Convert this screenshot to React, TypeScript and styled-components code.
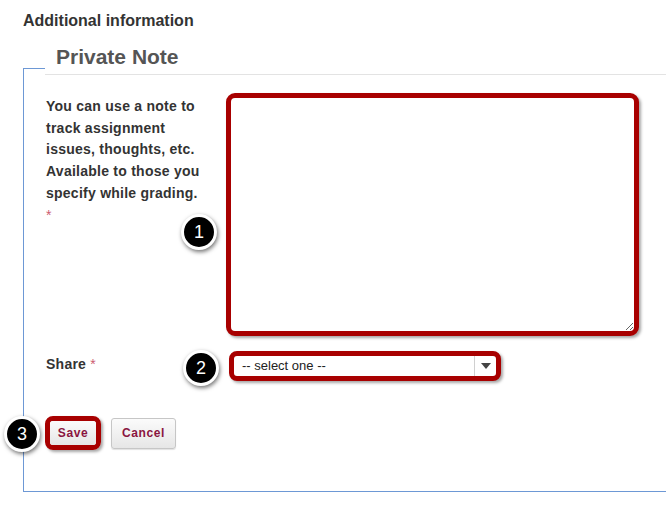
import React from "react";
import styled, { createGlobalStyle } from "styled-components";

const GlobalStyle = createGlobalStyle`
  html, body {
    margin: 0;
    padding: 0;
    background: #ffffff;
    overflow: hidden;
  }
  body {
    font-family: "Liberation Sans", Arial, sans-serif;
  }
`;

const annotationRed = "#a80000";
const fieldsetBlue = "#6d98d5";

const Page = styled.div`
  width: 666px;
  height: 518px;
  box-sizing: border-box;
  padding: 11px 0 0 23px;
`;

const Heading = styled.h3`
  margin: 0 0 37px;
  font-size: 16px;
  line-height: 20px;
  font-weight: bold;
  color: #333333;
`;

// FIELDSET

const Fieldset = styled.section`
  position: relative;
  display: flex;
  flex-direction: column;
  border-left: 1px solid ${fieldsetBlue};
  border-bottom: 1px solid ${fieldsetBlue};
  padding: 0 0 41px 22px;

  &::before {
    content: "";
    position: absolute;
    left: -1px;
    top: 0;
    width: 22px;
    border-top: 1px solid ${fieldsetBlue};
  }
`;

const Legend = styled.h2`
  margin: -23px 0 18px -1px;
  padding: 0 0 5px 11px;
  font-size: 21px;
  line-height: 24px;
  font-weight: bold;
  color: #555555;
  border-bottom: 1px solid #e3e3e3;
`;

const Row = styled.div<{ $label: number; $gap?: number }>`
  display: grid;
  grid-template-columns: ${(p) => p.$label}px auto;
  align-items: start;
  margin-top: ${(p) => p.$gap ?? 0}px;
`;

const Label = styled.label`
  width: 164px;
  padding-top: 3px;
  font-size: 14px;
  line-height: 21.7px;
  font-weight: bold;
  letter-spacing: 0.25px;
  color: #333333;
`;

const Required = styled.span<{ $block?: boolean }>`
  display: ${(p) => (p.$block ? "block" : "inline")};
  font-size: 14px;
  font-weight: normal;
  color: #cc5c70;
`;

// FIELDS

const FieldWrap = styled.div`
  position: relative;
  width: max-content;
`;

const NoteArea = styled.textarea`
  display: block;
  width: 413px;
  height: 243px;
  box-sizing: border-box;
  border: 5px solid ${annotationRed};
  border-radius: 9px;
  box-shadow: 2px 2px 3px rgba(0, 0, 0, 0.35);
  outline: none;
  background: #ffffff;
`;

const SelectBox = styled.div`
  display: flex;
  width: 272px;
  height: 30px;
  box-sizing: border-box;
  border: 5px solid ${annotationRed};
  border-radius: 8px;
  box-shadow: 2px 2px 3px rgba(0, 0, 0, 0.35);
  background: #ffffff;
`;

const SelectValue = styled.span`
  flex: 1;
  padding-left: 8px;
  font-size: 13px;
  line-height: 20px;
  color: #222222;
`;

const SelectArrow = styled.span`
  display: flex;
  align-items: center;
  justify-content: center;
  width: 21px;
  border-left: 1px solid #d0d0d0;

  &::after {
    content: "";
    border-left: 5px solid transparent;
    border-right: 5px solid transparent;
    border-top: 6px solid #444444;
  }
`;

// BUTTONS

const ButtonRow = styled.div`
  display: flex;
  align-items: center;
  gap: 10px;
  margin: 35px 0 0 -1px;
`;

const Highlight = styled.div`
  border: 5px solid ${annotationRed};
  border-radius: 8px;
  box-shadow: 2px 2px 3px rgba(0, 0, 0, 0.35);
  overflow: hidden;
`;

const Button = styled.button<{ $flat?: boolean; $width: number; $height: number }>`
  display: block;
  width: ${(p) => p.$width}px;
  height: ${(p) => p.$height}px;
  padding: 0;
  box-sizing: border-box;
  border: ${(p) => (p.$flat ? "none" : "1px solid #c6c6c6")};
  border-radius: ${(p) => (p.$flat ? 0 : 3)}px;
  background: linear-gradient(#fbfbfb, #e6e6e6);
  box-shadow: ${(p) => (p.$flat ? "none" : "0 1px 1px rgba(0, 0, 0, 0.12)")};
  font-family: "Liberation Sans", Arial, sans-serif;
  font-size: 12px;
  font-weight: bold;
  letter-spacing: 0.6px;
  color: #8a1540;
`;

// CALLOUTS

const Callout = styled.span<{ $left: number; $top: number }>`
  position: absolute;
  left: ${(p) => p.$left}px;
  top: ${(p) => p.$top}px;
  display: flex;
  align-items: center;
  justify-content: center;
  width: 36px;
  height: 36px;
  box-sizing: border-box;
  border: 3px solid #ffffff;
  border-radius: 50%;
  background: #000000;
  box-shadow: 1px 2px 4px rgba(0, 0, 0, 0.55);
  font-size: 18px;
  color: #ffffff;
`;

export default function App() {
  return (
    <Page>
      <GlobalStyle />
      <Heading>Additional information</Heading>
      <Fieldset>
        <Legend>Private Note</Legend>
        <Row $label={180}>
          <Label>
            You can use a note to track assignment issues, thoughts, etc.
            Available to those you specify while grading.
            <Required $block>*</Required>
          </Label>
          <FieldWrap>
            <Callout $left={-45} $top={121}>1</Callout>
            <NoteArea />
          </FieldWrap>
        </Row>
        <Row $label={183} $gap={15}>
          <Label>
            Share <Required>*</Required>
          </Label>
          <FieldWrap>
            <Callout $left={-46} $top={-1}>2</Callout>
            <SelectBox>
              <SelectValue>-- select one --</SelectValue>
              <SelectArrow />
            </SelectBox>
          </FieldWrap>
        </Row>
        <ButtonRow>
          <FieldWrap>
            <Callout $left={-41} $top={0}>3</Callout>
            <Highlight>
              <Button $flat $width={46} $height={24}>Save</Button>
            </Highlight>
          </FieldWrap>
          <Button $width={65} $height={31}>Cancel</Button>
        </ButtonRow>
      </Fieldset>
    </Page>
  );
}
